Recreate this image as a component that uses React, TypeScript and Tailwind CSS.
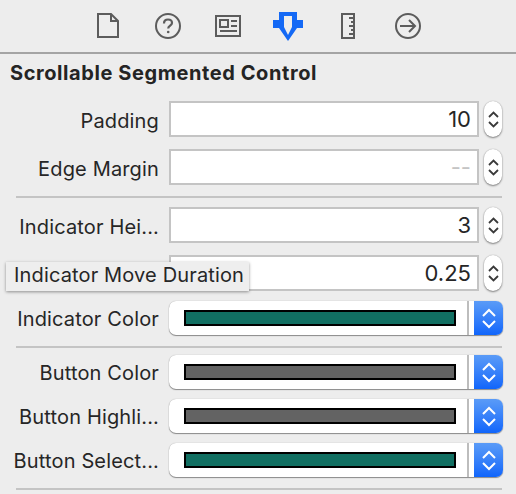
import React from "react";

function Stepper() {
  return (
    <div className="flex h-[36px] w-[18px] flex-col items-center justify-center gap-[3px] rounded-[9px] bg-white shadow-[0_1px_2px_rgba(0,0,0,0.45),0_0_1px_rgba(0,0,0,0.3)]">
      <svg width="11" height="7" viewBox="0 0 11 7" fill="none" stroke="#3a3a3a" strokeWidth="1.8">
        <path d="M1 6 L5.5 1.5 L10 6" />
      </svg>
      <svg width="11" height="7" viewBox="0 0 11 7" fill="none" stroke="#3a3a3a" strokeWidth="1.8">
        <path d="M1 1 L5.5 5.5 L10 1" />
      </svg>
    </div>
  );
}

function NumberRow({ label, value, muted }: { label: string; value: string; muted?: boolean }) {
  return (
    <div className="flex h-[36px] items-center">
      <div className="w-[159px] shrink-0 whitespace-nowrap pt-[3px] text-right text-[20px] tracking-[0.15px] text-[#262626]">
        {label}
      </div>
      <div
        className={`ml-[10px] flex h-[36px] w-[310px] items-center justify-end border-2 border-[#c4c4c4] bg-white pr-[6px] text-[22px] ${
          muted ? "text-[#c4c4c4]" : "text-[#262626]"
        }`}
      >
        {value}
      </div>
      <div className="ml-[5px]">
        <Stepper />
      </div>
    </div>
  );
}

function ColorRow({ label, color }: { label: string; color: string }) {
  return (
    <div className="flex h-[34px] items-center">
      <div className="w-[159px] shrink-0 whitespace-nowrap pt-[1px] text-right text-[20px] tracking-[0.15px] text-[#262626]">
        {label}
      </div>
      <div className="ml-[10px] flex h-[34px] w-[334px] overflow-hidden rounded-[7px] bg-white shadow-[0_1px_1px_rgba(0,0,0,0.4),0_0_1px_rgba(0,0,0,0.35)]">
        <div className="flex flex-1 items-center pl-[15px]">
          <div className="h-[16px] w-[272px] border-2 border-black" style={{ backgroundColor: color }} />
        </div>
        <div className="w-[2px] bg-[#bdbdbd]" />
        <div className="ml-[5px] flex w-[29px] flex-col items-center justify-center gap-[3px] bg-gradient-to-b from-[#5a9bf7] to-[#0f65fb]">
          <svg width="14" height="9" viewBox="0 0 14 9" fill="none" stroke="#fff" strokeWidth="2">
            <path d="M1 8 L7 2 L13 8" />
          </svg>
          <svg width="14" height="9" viewBox="0 0 14 9" fill="none" stroke="#fff" strokeWidth="2">
            <path d="M1 1 L7 7 L13 1" />
          </svg>
        </div>
      </div>
    </div>
  );
}

function Divider() {
  return <div className="ml-[16px] h-[2px] w-[486px] bg-[#c4c4c4]" />;
}

function Toolbar() {
  const grey = "#5c5c5c";
  return (
    <div className="flex h-[54px] items-center border-b-2 border-[#a4a4a4]">
      <div className="flex w-full items-center pl-[97px]">
        {/* file */}
        <svg width="22" height="26" viewBox="0 0 22 26" fill="none" stroke={grey} strokeWidth="2">
          <path d="M1 1 H14 L21 8 V24 H1 Z M14 1 V8 H21" />
        </svg>
        {/* quick help */}
        <svg className="ml-[36px]" width="26" height="26" viewBox="0 0 26 26" fill="none" stroke={grey} strokeWidth="2">
          <circle cx="13" cy="13" r="12" />
          <path d="M9 10.5 C9 7.5 11 6.5 13 6.5 C15.5 6.5 17 8 17 10 C17 12.5 13.2 12.8 13.2 15.5" strokeWidth="2.2" />
          <circle cx="13.2" cy="19" r="1.3" fill={grey} stroke="none" />
        </svg>
        {/* identity */}
        <svg className="ml-[34px]" width="26" height="22" viewBox="0 0 26 22" fill="none" stroke={grey} strokeWidth="2">
          <rect x="1" y="1" width="24" height="20" />
          <rect x="5" y="5" width="8" height="7" />
          <path d="M16 6 H22 M16 11 H22 M5 16 H22" />
        </svg>
        {/* attributes */}
        <svg className="ml-[32px]" width="30" height="29" viewBox="0 0 30 29" fill="#1469f5" fillRule="evenodd">
          <path d="M6 0 H24 V8 H30 V16 H24 L15 29 L6 16 H0 V8 H6 Z M11 4 V15 L15 23 L19 15 V4 Z" />
        </svg>
        {/* size ruler */}
        <svg className="ml-[38px]" width="14" height="26" viewBox="0 0 14 26" fill="none" stroke={grey} strokeWidth="2">
          <rect x="1" y="1" width="12" height="24" />
          <path d="M8 5 H13 M10 9 H13 M8 13 H13 M10 17 H13 M8 21 H13" />
        </svg>
        {/* connections */}
        <svg className="ml-[40px]" width="26" height="26" viewBox="0 0 26 26" fill="none" stroke={grey} strokeWidth="2">
          <circle cx="13" cy="13" r="12" />
          <path d="M5 13 H20 M14 7 L20 13 L14 19" />
        </svg>
      </div>
    </div>
  );
}

export default function App() {
  return (
    <div
      className="relative h-[494px] w-[516px] overflow-hidden bg-[#ededed]"
      style={{ fontFamily: "Inter, 'Liberation Sans', sans-serif" }}
    >
      <Toolbar />
      <div className="h-[37px] whitespace-nowrap pl-[10px] pt-[7px] text-[20px] font-bold leading-[24px] tracking-[0.58px] text-[#242424]">
        Scrollable Segmented Control
      </div>
      <div className="mt-[10px] flex flex-col gap-[12px]">
        <NumberRow label="Padding" value="10" />
        <NumberRow label="Edge Margin" value="--" muted />
      </div>
      <div className="mt-[11px] mb-[9px]">
        <Divider />
      </div>
      <div className="flex flex-col gap-[12px]">
        <NumberRow label="Indicator Hei..." value="3" />
        <NumberRow label="" value="0.25" />
      </div>
      <div className="mt-[10px]">
        <ColorRow label="Indicator Color" color="#116f62" />
      </div>
      <div className="mt-[11px] mb-[7px]">
        <Divider />
      </div>
      <div className="flex flex-col gap-[10px]">
        <ColorRow label="Button Color" color="#636363" />
        <ColorRow label="Button Highli..." color="#636363" />
        <ColorRow label="Button Select..." color="#116f62" />
      </div>
      <div className="mt-[11px]">
        <Divider />
      </div>
      {/* tooltip over the hovered label */}
      <div className="absolute left-[6px] top-[262px] flex h-[29px] w-[243px] items-center whitespace-nowrap bg-[#eeeeee] pb-[3px] pl-[8px] text-[20px] tracking-[0.15px] text-[#262626] shadow-[0_1px_3px_rgba(0,0,0,0.4)]">
        Indicator Move Duration
      </div>
    </div>
  );
}
